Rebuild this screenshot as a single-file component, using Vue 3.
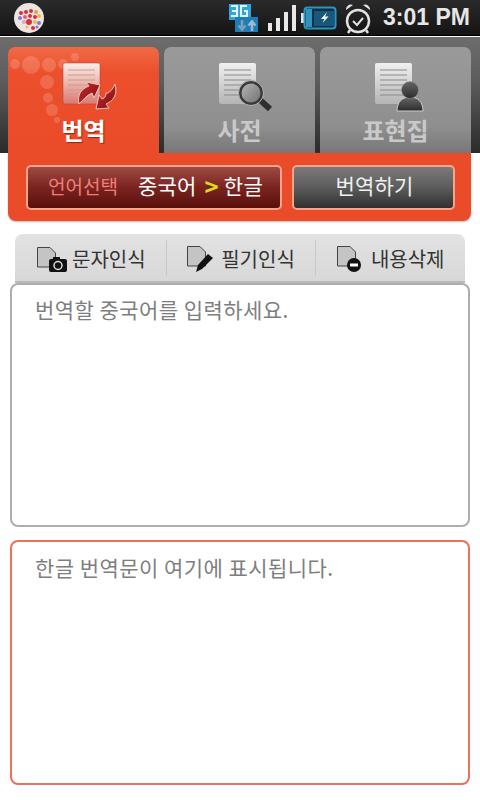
<template>
  <div class="screen">
    <div class="status-bar">
      <svg class="app-dot" width="32" height="32" viewBox="0 0 32 32">
        <circle cx="16" cy="16" r="15" fill="#ece6e2" />
        <circle v-for="(d, i) in dots" :key="i" :cx="d[0]" :cy="d[1]" :r="d[2]" :fill="d[3]" />
      </svg>
      <div class="status-right">
        <svg width="30" height="30" viewBox="0 0 30 30">
          <rect x="0" y="1" width="22" height="16" fill="#31a5dc" />
          <rect x="6" y="14" width="23" height="15" fill="#1e7dbb" />
          <path d="M2 3h6v10H2M3 8h5M18 3h-6v10h6V8h-3" fill="none" stroke="#e8f6fc" stroke-width="2" />
          <path d="M13 17v9m-3.500-3.500l3.500 4 3.500-4" fill="none" stroke="#7da0b4" stroke-width="2.500" />
          <path d="M23 28v-9m-3.500 3.500l3.500-4 3.500 4" fill="none" stroke="#a4bac8" stroke-width="2.500" />
        </svg>
        <svg class="signal" width="29" height="27" viewBox="0 0 29 27">
          <rect x="0" y="19" width="4" height="8" fill="#e8e8e8" />
          <rect x="8" y="14" width="4" height="13" fill="#e8e8e8" />
          <rect x="16" y="8" width="4" height="19" fill="#e8e8e8" />
          <rect x="24" y="1" width="4" height="26" fill="#e8e8e8" />
        </svg>
        <svg class="battery" width="36" height="24" viewBox="0 0 36 24">
          <rect x="0" y="7" width="3" height="10" fill="#d8e4ea" />
          <rect x="3.500" y="1.500" width="31" height="21" rx="3" fill="#0e2f42" stroke="#2f93bd" stroke-width="2" />
          <rect x="5" y="3" width="6" height="18" fill="#2f93bd" />
          <rect x="13" y="5" width="20" height="15" fill="#17587c" />
          <path d="M26 6l-6 7h3.500l-2 4 6-6.500h-3.500z" fill="#fff" />
        </svg>
        <svg class="alarm" width="30" height="32" viewBox="0 0 30 32">
          <circle cx="15" cy="19" r="11" fill="none" stroke="#e2e2e2" stroke-width="2.500" />
          <path d="M3 8a5 5 0 0 1 7-5zM27 8a5 5 0 0 0-7-5z" fill="#e2e2e2" />
          <path d="M10 19l4 4 6-7" fill="none" stroke="#e2e2e2" stroke-width="2" />
          <path d="M7 28l-2 3M23 28l2 3" stroke="#e2e2e2" stroke-width="2.500" />
        </svg>
        <span class="clock">3:01 PM</span>
      </div>
    </div>

    <div class="tabs">
      <div class="tab active">
        <svg class="bubbles" width="110" height="100" viewBox="0 0 110 100">
          <circle v-for="(b, i) in bubbles" :key="i" :cx="b[0]" :cy="b[1]" :r="b[2]" fill="#fff" opacity="0.16" />
        </svg>
        <svg class="tab-icon" width="58" height="50" viewBox="0 0 58 50">
          <defs>
            <linearGradient id="redDoc" x1="0" y1="0" x2="0" y2="1">
              <stop offset="0" stop-color="#fbeee9" />
              <stop offset="1" stop-color="#d97a70" />
            </linearGradient>
            <linearGradient id="redArrow" x1="0" y1="0" x2="1" y2="1">
              <stop offset="0" stop-color="#c8282c" />
              <stop offset="1" stop-color="#7e1014" />
            </linearGradient>
          </defs>
          <rect x="2" y="1" width="37" height="41" rx="2" fill="url(#redDoc)" stroke="#a8403a" stroke-width="0.500" />
          <path v-for="y in docLines" :key="y" :d="`M7 ${y}h27`" stroke="#cf9a92" stroke-width="1" />
          <path d="M18 42C16 33 20 27 28 24l-3-4 14 3-6 13-2-5c-5 2-8 6-13 11z" fill="url(#redArrow)" stroke="#f3c6b8" stroke-width="1" />
          <path d="M54 22c3 11-2 17-9 20l3 4-13 1 3-14 3 4c3-1 4-3 4-6 3 1 7-4 9-9z" fill="url(#redArrow)" stroke="#f3c6b8" stroke-width="1" />
        </svg>
        <span class="tab-label">번역</span>
      </div>
      <div class="tab">
        <svg class="tab-icon" width="58" height="50" viewBox="0 0 58 50">
          <defs>
            <linearGradient id="grayDoc" x1="0" y1="0" x2="0" y2="1">
              <stop offset="0" stop-color="#f0f0f0" />
              <stop offset="1" stop-color="#b4b4b4" />
            </linearGradient>
            <linearGradient id="lens" x1="0" y1="0" x2="1" y2="1">
              <stop offset="0" stop-color="#b8b8b8" />
              <stop offset="1" stop-color="#6e6e6e" />
            </linearGradient>
            <linearGradient id="person" x1="0" y1="0" x2="0" y2="1">
              <stop offset="0" stop-color="#666" />
              <stop offset="1" stop-color="#2c2c2c" />
            </linearGradient>
          </defs>
          <rect x="2" y="1" width="37" height="41" rx="2" fill="url(#grayDoc)" />
          <path v-for="y in docLines" :key="y" :d="`M7 ${y}h27`" stroke="#8a8a8a" stroke-width="1" />
          <path d="M43 38l10 9" stroke="#2e2e2e" stroke-width="6" />
          <circle cx="34" cy="31" r="11" fill="url(#lens)" stroke="#3a3a3a" stroke-width="3" />
          <circle cx="34" cy="31" r="12.500" fill="none" stroke="#b5b5b5" stroke-width="1" />
        </svg>
        <span class="tab-label">사전</span>
      </div>
      <div class="tab">
        <svg class="tab-icon" width="58" height="50" viewBox="0 0 58 50">
          <rect x="2" y="1" width="37" height="41" rx="2" fill="url(#grayDoc)" />
          <path v-for="y in docLines" :key="y" :d="`M7 ${y}h27`" stroke="#8a8a8a" stroke-width="1" />
          <path d="M24 49c0-9 5-14 13-14s13 5 13 14z" fill="url(#person)" stroke="#ccc" stroke-width="1" />
          <circle cx="37" cy="28" r="8.500" fill="url(#person)" stroke="#999" stroke-width="0.500" />
        </svg>
        <span class="tab-label">표현집</span>
      </div>
    </div>

    <div class="action-panel">
      <button class="lang-btn">
        <span class="lang-title">언어선택</span>
        <span>중국어</span>
        <b class="chevron">&gt;</b>
        <span>한글</span>
      </button>
      <button class="translate-btn">번역하기</button>
    </div>

    <div class="toolbar">
      <div class="tool">
        <svg class="camera-icon" width="30" height="25" viewBox="0 0 30 25">
          <path d="M.5.5h12.500l5.500 5.500v14H.5z" fill="#c4c4c4" stroke="#444" stroke-width="1" />
          <rect x="12" y="12" width="18" height="13" rx="2" fill="#111" />
          <rect x="16" y="10" width="7" height="3" fill="#111" />
          <circle cx="21" cy="18.500" r="4" fill="#111" stroke="#ddd" stroke-width="1.500" />
        </svg>
        <span>문자인식</span>
      </div>
      <div class="tool">
        <svg class="pen-icon" width="27" height="27" viewBox="0 0 27 27">
          <path d="M.5.5h12.500l5.500 5.500v14H.5z" fill="#c4c4c4" stroke="#444" stroke-width="1" />
          <path d="M21 8l5 4-11 11-6 3 2-7z" fill="#111" />
        </svg>
        <span>필기인식</span>
      </div>
      <div class="tool">
        <svg class="minus-icon" width="25" height="27" viewBox="0 0 25 27">
          <path d="M.5.5h12.500l5.500 5.500v14H.5z" fill="#c4c4c4" stroke="#444" stroke-width="1" />
          <circle cx="17" cy="19" r="7" fill="#111" />
          <rect x="13" y="17.500" width="8" height="3" fill="#fff" />
        </svg>
        <span>내용삭제</span>
      </div>
    </div>

    <div class="text-box source">번역할 중국어를 입력하세요.</div>
    <div class="text-box result">한글 번역문이 여기에 표시됩니다.</div>
  </div>
</template>

<script setup>
const docLines = [8, 13, 18, 23, 28, 33]

const bubbles = [
  [7, 17, 5],
  [23, 18, 9],
  [41, 18, 7],
  [55, 17, 5],
  [67, 10, 4],
  [39, 35, 7],
  [40, 51, 5],
  [44, 63, 6],
  [49, 73, 3]
]

const dots = [
  [8, 11, 2, '#d8303c'],
  [13, 10, 2, '#d8303c'],
  [18, 9, 2, '#d8303c'],
  [23, 10, 2, '#e8a040'],
  [26, 14, 2, '#e8c040'],
  [7, 16, 2, '#9070d0'],
  [12, 15, 2, '#e06070'],
  [17, 14, 2, '#d8303c'],
  [22, 15, 2, '#d8303c'],
  [11, 20, 2, '#e0a0c0'],
  [16, 20, 3, '#d8303c'],
  [22, 20, 2, '#e0c050'],
  [26, 21, 2, '#9070d0'],
  [14, 25, 1.500, '#e8c040'],
  [20, 26, 2, '#d8303c'],
  [24, 25, 1.500, '#9070d0']
]
</script>

<style scoped>
.screen {
  width: 480px;
  height: 800px;
  overflow: hidden;
  background: #fff;
  font-family: "Noto Sans CJK KR", "Liberation Sans", sans-serif;
}

.status-bar {
  height: 36px;
  box-sizing: border-box;
  border-bottom: 1px solid #000;
  margin-bottom: 1px;
  background: linear-gradient(#2a2a2a, #141414);
  display: flex;
  align-items: center;
  justify-content: space-between;
  padding: 0 10px 0 13px;
}

.status-right {
  display: flex;
  align-items: center;
  gap: 3px;
}

.signal {
  margin-left: 6px;
}

.battery {
  margin-left: 1px;
}

.alarm {
  margin-left: 3px;
}

.clock {
  font-family: "Liberation Sans", sans-serif;
  font-weight: 700;
  font-size: 23px;
  color: #e6e6e6;
  margin-left: 7px;
  white-space: nowrap;
}

.tabs {
  height: 116px;
  box-sizing: border-box;
  padding: 10px 9px 0 8px;
  background: linear-gradient(#6d6d6d, #5b5b5b 40%, #2b2b2b);
  display: flex;
  gap: 5px;
}

.tab {
  position: relative;
  flex: 1;
  border-radius: 7px 7px 0 0;
  background: linear-gradient(#9a9a9a, #8f8f8f 75%, #777);
  display: flex;
  flex-direction: column;
  align-items: center;
  padding-top: 15px;
  box-sizing: border-box;
  overflow: hidden;
}

.tab.active {
  background: linear-gradient(#f06a45, #ec4f2b 25%, #ea4c29);
}

.bubbles {
  position: absolute;
  left: 0;
  top: 0;
}

.tab-icon {
  position: relative;
  flex: none;
  margin-left: 12px;
}

.tab-label {
  position: relative;
  font-size: 24px;
  line-height: 34px;
  margin-top: 1px;
  font-weight: 700;
  color: #c9c9c9;
}

.tab.active .tab-label {
  color: #fff;
  text-shadow: 1px 1px 1px #8a2a12;
}

.action-panel {
  margin: 0 9px 0 8px;
  height: 68px;
  box-sizing: border-box;
  padding: 12px 16px 11px 18px;
  background: #ea4c29;
  border-radius: 0 0 8px 8px;
  box-shadow: 0 1px 2px #bbb;
  display: flex;
  gap: 10px;
}

.lang-btn,
.translate-btn {
  height: 45px;
  border: 2px solid #f6a48c;
  border-radius: 5px;
  color: #fff;
  font-family: inherit;
  padding: 0 0 5px;
  font-size: 21px;
  letter-spacing: 0.2px;
  box-sizing: border-box;
}

.lang-btn {
  width: 256px;
  background: linear-gradient(#a04a44, #7a2420 50%, #5a100c);
  display: flex;
  align-items: center;
  padding-left: 20px;
  white-space: nowrap;
}

.lang-title {
  color: #f07f72;
  font-size: 19px;
  letter-spacing: 0;
  margin-right: 20px;
}

.chevron {
  color: #dcd820;
  font-weight: 700;
  font-size: 24px;
  margin: 0 5px 0 8px;
}

.translate-btn {
  width: 163px;
  background: linear-gradient(#7a7a7a, #5c5c5c 50%, #303030);
  color: #f0f0f0;
  padding-left: 2px;
}

.toolbar {
  margin: 13px 15px 0;
  height: 49px;
  box-sizing: border-box;
  padding: 6px 0 5px;
  background: linear-gradient(#e2e2e2, #d8d8d8);
  border-bottom: 2px solid #b8b8b8;
  border-radius: 8px 8px 0 0;
  display: flex;
}

.tool {
  flex: 1;
  display: flex;
  align-items: center;
  justify-content: center;
  font-size: 20px;
  color: #333;
  border-left: 1px solid #c8c8c8;
  white-space: nowrap;
}

.tool:first-child {
  border-left: 0;
  padding-left: 2px;
}

.camera-icon {
  margin: 2px 5px 0 0;
}

.pen-icon {
  margin: 3px 7px 0 0;
}

.minus-icon {
  margin: 3px 9px 0 0;
}

.text-box {
  margin: 0 10px;
  width: 460px;
  height: 244px;
  box-sizing: border-box;
  background: #fff;
  border: 2px solid #adadad;
  border-radius: 8px;
  padding: 9px 23px;
  font-size: 21px;
  letter-spacing: 0.45px;
  line-height: 31px;
  color: #7e7e7e;
}

.text-box.result {
  margin-top: 13px;
  height: 245px;
  padding-top: 10px;
  border-color: #e8725a;
}
</style>
